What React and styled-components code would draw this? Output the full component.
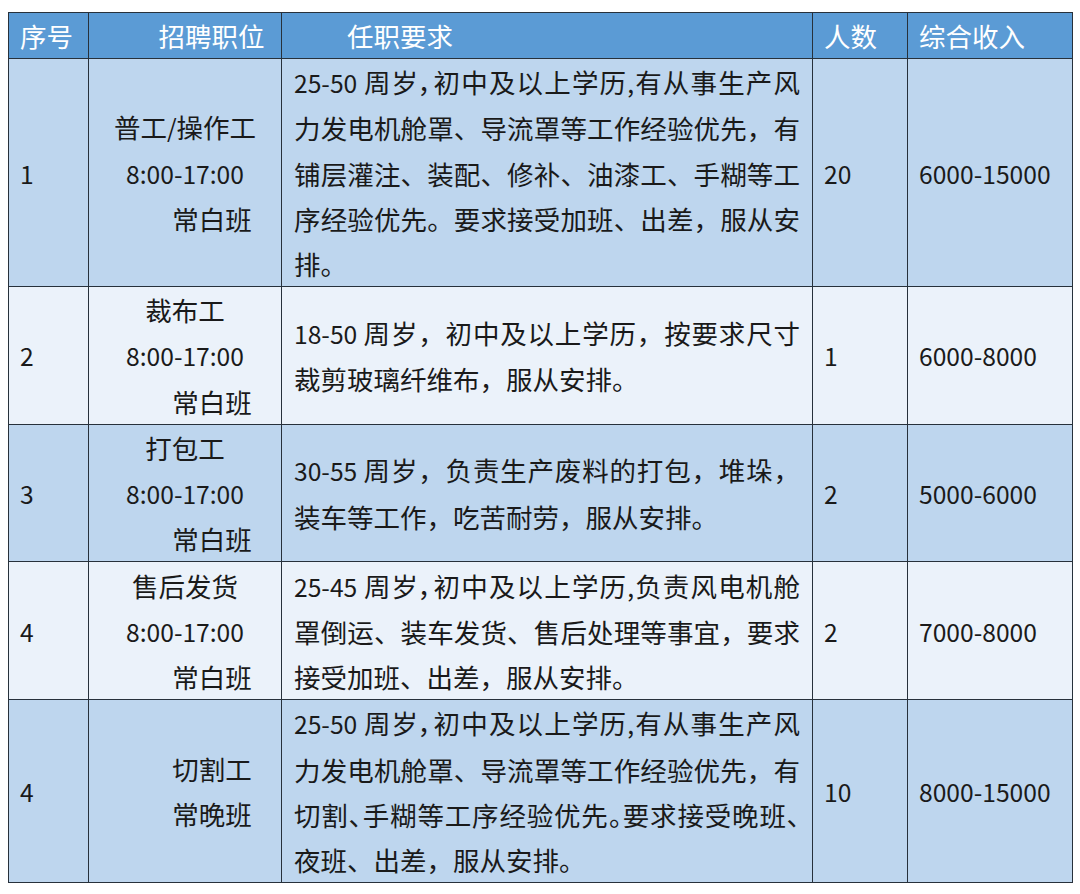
import React from "react";
import styled, { createGlobalStyle } from "styled-components";

const GlobalStyle = createGlobalStyle`
  html, body { margin: 0; padding: 0; background: #ffffff; }
  body { font-family: "Noto Sans CJK SC", "Noto Sans", sans-serif; }
`;

const Page = styled.div`
  padding: 12px 8px 0 8px;
`;

const Table = styled.table`
  width: 1064px;
  border-collapse: collapse;
  table-layout: fixed;
  font-size: 26.5px;
  line-height: 45.2px;
  color: #1a1a1a;
`;

const HeadRow = styled.tr`
  height: 45px;
  background: #5b9bd5;
`;

const BodyRow = styled.tr`
  height: ${(p) => p.$h}px;
  background: ${(p) => (p.$shade === "dark" ? "#bed6ee" : "#ebf2fa")};
`;

const Th = styled.th`
  border: 1px solid #27313b;
  padding: 0 12px 0 ${(p) => 11 + (p.$indent || 0)}px;
  font-weight: 400;
  color: #ffffff;
  text-align: ${(p) => p.$align || "left"};
  white-space: nowrap;
  vertical-align: middle;
`;

const Td = styled.td`
  border: 1px solid #27313b;
  padding: 0 12px 0 11px;
  vertical-align: middle;
  white-space: nowrap;
  text-align: left;
`;

const PosCell = styled(Td)`
  padding: 0 12px;
`;

const ReqCell = styled(Td)`
  padding: 0 12px 0 12px;
`;

const PosLine = styled.div`
  text-align: center;
  padding-left: ${(p) => (p.$indent ? 54 : 0)}px;
`;

const ReqLine = styled.div`
  white-space: nowrap;
  text-align: ${(p) => (p.$fill ? "justify" : "left")};
  text-align-last: ${(p) => (p.$fill ? "justify" : "left")};
  font-feature-settings: ${(p) => (p.$compact ? '"palt"' : "normal")};
`;

const Latin = styled.span`
  font-size: 0.93em;
`;

function Mixed({ text }) {
  const parts = text.split(/([0-9A-Za-z:\-\/,. ]+)/).filter((s) => s !== "");
  return parts.map((p, i) =>
    /^[0-9A-Za-z:\-\/,. ]+$/.test(p) ? <Latin key={i}>{p}</Latin> : <React.Fragment key={i}>{p}</React.Fragment>
  );
}

const rows = [
  {
    no: "1",
    pos: [["普工/操作工", 0], ["8:00-17:00", 0], ["常白班", 1]],
    req: [
      ["25-50 周岁，初中及以上学历,有从事生产风", 1, 1],
      ["力发电机舱罩、导流罩等工作经验优先，有", 1],
      ["铺层灌注、装配、修补、油漆工、手糊等工", 1],
      ["序经验优先。要求接受加班、出差，服从安", 1],
      ["排。", 0],
    ],
    n: "20",
    pay: "6000-15000",
    h: 228,
    shade: "dark",
  },
  {
    no: "2",
    pos: [["裁布工", 0], ["8:00-17:00", 0], ["常白班", 1]],
    req: [
      ["18-50 周岁，初中及以上学历，按要求尺寸", 1],
      ["裁剪玻璃纤维布，服从安排。", 0],
    ],
    n: "1",
    pay: "6000-8000",
    h: 136,
    shade: "light",
  },
  {
    no: "3",
    pos: [["打包工", 0], ["8:00-17:00", 0], ["常白班", 1]],
    req: [
      ["30-55 周岁，负责生产废料的打包，堆垛，", 1],
      ["装车等工作，吃苦耐劳，服从安排。", 0],
    ],
    n: "2",
    pay: "5000-6000",
    h: 136,
    shade: "dark",
  },
  {
    no: "4",
    pos: [["售后发货", 0], ["8:00-17:00", 0], ["常白班", 1]],
    req: [
      ["25-45 周岁，初中及以上学历,负责风电机舱", 1, 1],
      ["罩倒运、装车发货、售后处理等事宜，要求", 1],
      ["接受加班、出差，服从安排。", 0],
    ],
    n: "2",
    pay: "7000-8000",
    h: 138,
    shade: "light",
  },
  {
    no: "4",
    pos: [["切割工", 1], ["常晚班", 1]],
    req: [
      ["25-50 周岁，初中及以上学历,有从事生产风", 1, 1],
      ["力发电机舱罩、导流罩等工作经验优先，有", 1],
      ["切割、手糊等工序经验优先。要求接受晚班、", 1, 1],
      ["夜班、出差，服从安排。", 0],
    ],
    n: "10",
    pay: "8000-15000",
    h: 182,
    shade: "dark",
  },
];

export default function App() {
  return (
    <Page>
      <GlobalStyle />
      <Table>
        <colgroup>
          <col style={{ width: 80 }} />
          <col style={{ width: 193 }} />
          <col style={{ width: 531 }} />
          <col style={{ width: 95 }} />
          <col style={{ width: 165 }} />
        </colgroup>
        <thead>
          <HeadRow>
            <Th>序号</Th>
            <Th $align="center" $indent={54}>招聘职位</Th>
            <Th $indent={54}>任职要求</Th>
            <Th>人数</Th>
            <Th>综合收入</Th>
          </HeadRow>
        </thead>
        <tbody>
          {rows.map((r, i) => (
            <BodyRow key={i} $h={r.h} $shade={r.shade}>
              <Td><Mixed text={r.no} /></Td>
              <PosCell>
                {r.pos.map(([t, ind], j) => (
                  <PosLine key={j} $indent={ind}><Mixed text={t} /></PosLine>
                ))}
              </PosCell>
              <ReqCell>
                {r.req.map(([t, fill, compact], j) => (
                  <ReqLine key={j} $fill={fill} $compact={compact}><Mixed text={t} /></ReqLine>
                ))}
              </ReqCell>
              <Td><Mixed text={r.n} /></Td>
              <Td><Mixed text={r.pay} /></Td>
            </BodyRow>
          ))}
        </tbody>
      </Table>
    </Page>
  );
}
